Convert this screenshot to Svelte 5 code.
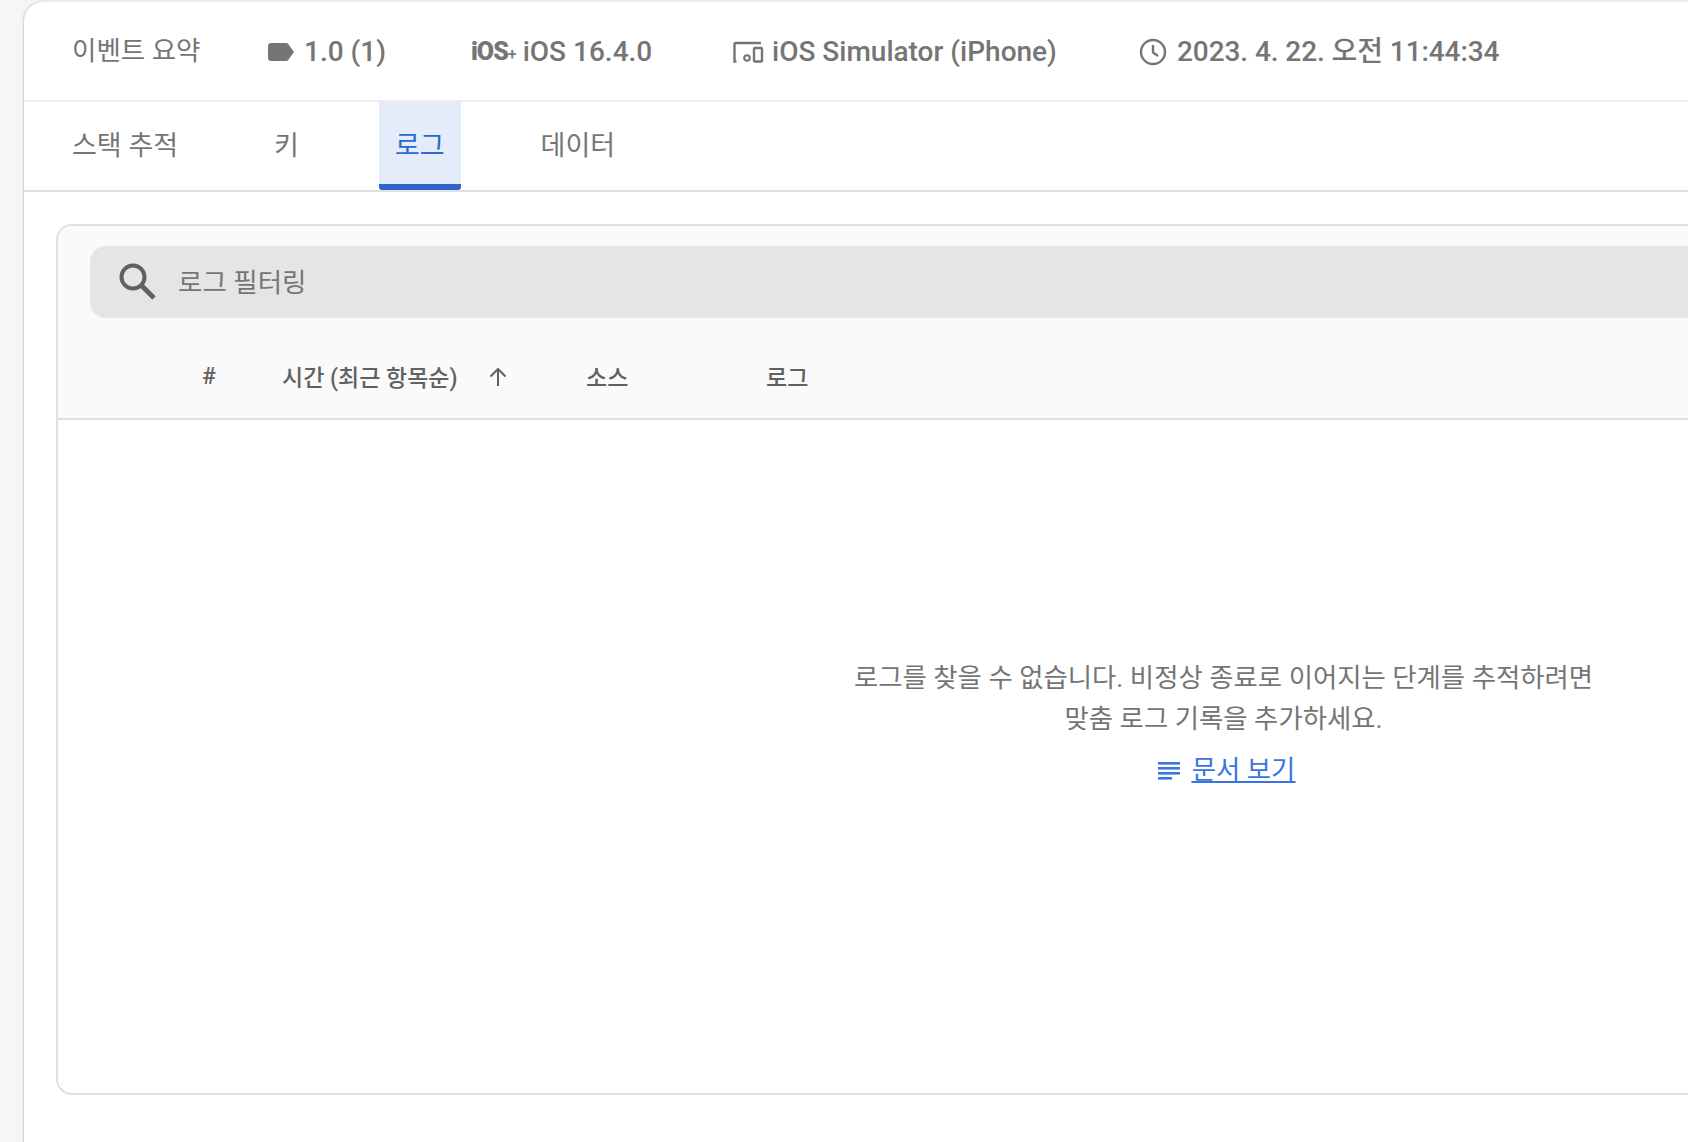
<script>
	const tabs = ["스택 추적", "키", "로그", "데이터"];
	let active = $state("로그");
</script>

<div class="page">
	<main class="card">
		<header class="summary">
			<span class="title">이벤트 요약</span>
			<span class="chip tag-chip">
				<svg width="26" height="18" viewBox="0 0 26 18"><path d="M3 0h15c1 0 1.800.4 2.400 1.200L26 9l-5.600 7.800c-.6.800-1.400 1.200-2.400 1.200H3c-1.700 0-3-1.300-3-3V3c0-1.700 1.300-3 3-3z" fill="#757575" /></svg>
				1.0 (1)
			</span>
			<span class="chip os-chip">
				<span class="os-mark">iOS<small>+</small></span>
				iOS 16.4.0
			</span>
			<span class="chip device-chip">
				<svg width="31" height="22" viewBox="0 0 31 22" fill="none" stroke="#757575" stroke-width="2.400"><path d="M3.500 20.500H1.500V3.500c0-1 .8-1.500 1.500-1.500h25" /><circle cx="14" cy="17" r="2.800" stroke-width="2" /><rect x="21" y="7" width="8" height="13.500" rx="1" stroke-width="2.400" /></svg>
				iOS Simulator (iPhone)
			</span>
			<span class="chip time-chip">
				<svg width="28" height="28" viewBox="0 0 28 28" fill="none" stroke="#757575" stroke-width="2.400"><circle cx="14" cy="14" r="12" /><path d="M14 7v7.500l5 3.500" /></svg>
				2023. 4. 22. 오전 11:44:34
			</span>
		</header>

		<nav class="tabs">
			{#each tabs as tab}
				<button class="tab" class:active={tab === active} onclick={() => (active = tab)}>{tab}</button>
			{/each}
		</nav>

		<section class="panel">
			<div class="panel-head">
				<div class="search">
					<svg width="38" height="38" viewBox="0 0 38 38" fill="none" stroke="#616161"><circle cx="15" cy="15" r="11.500" stroke-width="4" /><path d="M23.500 23.500L36 36" stroke-width="4.800" /></svg>
					<span>로그 필터링</span>
				</div>
				<div class="cols">
					<span class="col-num">#</span>
					<span class="col-time">시간 (최근 항목순)</span>
					<svg class="sort" width="22" height="22" viewBox="0 0 22 22" fill="none" stroke="#616161" stroke-width="2"><path d="M11 20V3M3.500 10.500L11 3l7.500 7.500" /></svg>
					<span class="col-source">소스</span>
					<span>로그</span>
				</div>
			</div>
			<div class="empty">
				<p>로그를 찾을 수 없습니다. 비정상 종료로 이어지는 단계를 추적하려면<br />맞춤 로그 기록을 추가하세요.</p>
				<a href="#docs">
					<svg width="22" height="18" viewBox="0 0 22 18" fill="#3a74e0"><rect y="0" width="22" height="2.600" /><rect y="5" width="22" height="2.600" /><rect y="10" width="22" height="2.600" /><rect y="15" width="14" height="2.600" /></svg>
					<span>문서 보기</span>
				</a>
			</div>
		</section>
	</main>
</div>

<style>
	:global(body) {
		background: #f5f6f8;
		overflow: hidden;
	}

	.page {
		height: 1142px;
		padding: 1px 0 0 24px;
		box-sizing: border-box;
		font-family: Roboto, "Noto Sans CJK KR", sans-serif;
		color: #757575;
		overflow: hidden;
	}

	.card {
		width: 2400px;
		height: 1160px;
		background: #fff;
		border-radius: 20px 0 0 0;
		border-top: 1px solid #ececec;
		box-shadow: -1px 0 2px #c9ccd2;
	}

	.summary {
		display: flex;
		align-items: center;
		height: 96px;
		padding: 2px 0 0 48px;
		border-bottom: 2px solid #eeeeee;
		font-size: 28px;
		line-height: 36px;
	}

	.title {
		font-size: 26.500px;
		width: 196px;
		margin-top: -2px;
	}

	.chip {
		display: flex;
		align-items: center;
		font-weight: 500;
	}

	.tag-chip {
		gap: 10px;
		width: 203px;
	}

	.os-chip {
		gap: 7px;
		width: 262px;
	}

	.os-mark {
		font-size: 25px;
		font-weight: 900;
		letter-spacing: -1px;
		margin-top: 3px;
	}

	.os-mark small {
		font-size: 16px;
		font-weight: 500;
	}

	.device-chip {
		gap: 8px;
		width: 406px;
	}

	.time-chip {
		gap: 10px;
		letter-spacing: -0.08px;
	}

	.tabs {
		display: flex;
		height: 88px;
		padding-left: 32px;
		border-bottom: 2px solid #e0e0e0;
	}

	.tab {
		height: 88px;
		padding: 6px 16px 0;
		margin-right: 64px;
		border: 0;
		background: none;
		font: 400 27px/36px Roboto, "Noto Sans CJK KR", sans-serif;
		color: #757575;
		box-sizing: border-box;
		border-bottom: 6px solid transparent;
		border-radius: 0 0 3px 3px;
	}

	.tab.active {
		background: #e5ecf9;
		color: #2f66d0;
		border-bottom-color: #2f63cb;
	}

	.panel {
		width: 2332px;
		margin: 32px 0 0 32px;
		height: 871px;
		box-sizing: border-box;
		border: 2px solid #e0e0e0;
		border-radius: 16px;
		overflow: hidden;
	}

	.panel-head {
		background: #fafafa;
		border-bottom: 2px solid #e0e0e0;
		height: 194px;
		box-sizing: border-box;
		padding: 20px 0 0 32px;
	}

	.search {
		display: flex;
		align-items: center;
		gap: 22px;
		height: 72px;
		padding-left: 28px;
		background: #e5e5e5;
		border-radius: 16px;
		font-size: 26.500px;
		line-height: 36px;
		color: #757575;
	}

	.search span {
		margin-top: 1px;
	}

	.search svg {
		margin-top: -2px;
	}

	.cols {
		display: flex;
		align-items: center;
		height: 60px;
		margin-top: 28px;
		padding-left: 112px;
		font-size: 23px;
		font-weight: 500;
		color: #616161;
	}

	.col-num {
		width: 80px;
	}

	.col-time {
		width: 205px;
	}

	.sort {
		margin: 2px 77px 0 0;
	}

	.col-source {
		width: 180px;
	}

	.empty {
		height: 673px;
		display: flex;
		flex-direction: column;
		align-items: center;
		justify-content: center;
		font-size: 26.400px;
		padding: 0 0 64px 3px;
		box-sizing: border-box;
	}

	.empty p {
		margin: 0;
		text-align: center;
		line-height: 41px;
	}

	.empty a {
		display: flex;
		align-items: center;
		gap: 12px;
		margin: 10px 0 0 6px;
		color: #3a74e0;
		line-height: 41px;
	}

	.empty a span {
		text-decoration: underline;
	}
</style>
